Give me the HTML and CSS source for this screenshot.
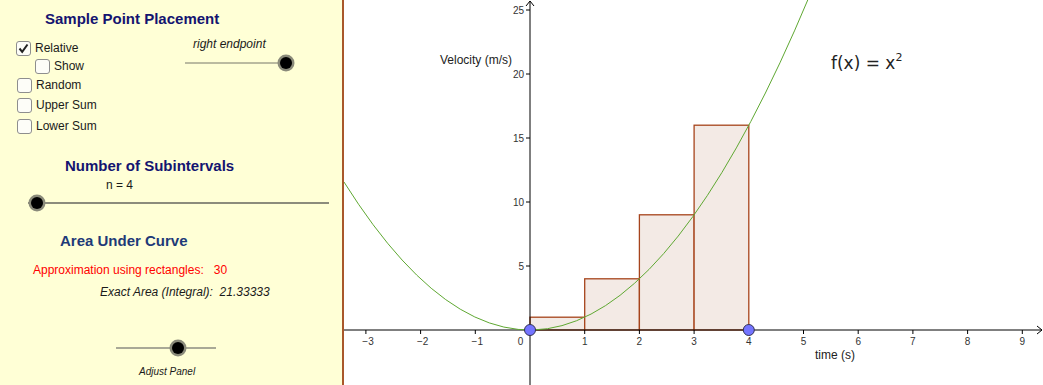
FILE: index.html
```html
<!DOCTYPE html>
<html lang="en">
<head>
  <meta charset="UTF-8">
  <title>Riemann Sums</title>
  <link rel="stylesheet" href="styles.css">
</head>
<body>
  <div class="app">
    <div class="panel">
      <div class="title title-sample">Sample Point Placement</div>

      <div class="options">
        <div class="checks">
          <div class="check">
            <span class="box">
              <svg width="13" height="13" viewBox="0 0 13 13"><polyline points="2.5,6.5 5.2,9.8 10.5,2.5" fill="none" stroke="#222" stroke-width="2"/></svg>
            </span>
            <span>Relative</span>
          </div>
          <div class="check check-show"><span class="box"></span><span>Show</span></div>
          <div class="check check-random"><span class="box"></span><span>Random</span></div>
          <div class="check check-upper"><span class="box"></span><span>Upper Sum</span></div>
          <div class="check check-lower"><span class="box"></span><span>Lower Sum</span></div>
        </div>
        <div class="endpoint">
          <div class="endpoint-label">right endpoint</div>
          <svg class="slider slider-endpoint" width="112" height="18">
            <line x1="0" y1="9" x2="105" y2="9" stroke="#77776a" stroke-width="1"/>
            <circle cx="101" cy="9" r="8.5" fill="#8a8a7a"/>
            <circle cx="101" cy="9" r="6" fill="#000"/>
          </svg>
        </div>
      </div>

      <div class="title title-sub">Number of Subintervals</div>
      <div class="n-label">n = 4</div>
      <svg class="slider slider-n" width="304" height="18">
        <line x1="1" y1="9" x2="302" y2="9" stroke="#8c8c7c" stroke-width="2"/>
        <circle cx="10" cy="9" r="8.5" fill="#8a8a7a"/>
        <circle cx="10" cy="9" r="6" fill="#000"/>
      </svg>

      <div class="title title-area">Area Under Curve</div>
      <div class="approx">Approximation using rectangles:   30</div>
      <div class="exact">Exact Area (Integral):  21.33333</div>
      <svg class="slider slider-adjust" width="101" height="18">
        <line x1="0" y1="9" x2="100" y2="9" stroke="#8c8c80" stroke-width="1.5"/>
        <circle cx="62" cy="9" r="8.5" fill="#8a8a7a"/>
        <circle cx="62" cy="9" r="6" fill="#000"/>
      </svg>
      <div class="adjust">Adjust Panel</div>
    </div>

    <svg class="graph" width="699" height="385" viewBox="0 0 699 385">
      <!-- rectangles, right endpoint, n = 4 -->
      <g class="rects">
        <rect x="186" y="317.2" width="54.7" height="12.8"/>
        <rect x="240.7" y="278.8" width="54.7" height="51.2"/>
        <rect x="295.4" y="214.8" width="54.7" height="115.2"/>
        <rect x="350.1" y="125.2" width="54.7" height="204.8"/>
      </g>

      <!-- axes -->
      <g class="axes">
        <line x1="0" y1="330" x2="698" y2="330"/>
        <polyline points="693,326 698,330 693,334" fill="none"/>
        <line x1="186" y1="385" x2="186" y2="1"/>
        <polyline points="182,6 186,1 190,6" fill="none"/>

        <line x1="21.9" y1="330" x2="21.9" y2="334"/>
        <line x1="76.6" y1="330" x2="76.6" y2="334"/>
        <line x1="131.3" y1="330" x2="131.3" y2="334"/>
        <line x1="240.7" y1="330" x2="240.7" y2="334"/>
        <line x1="295.4" y1="330" x2="295.4" y2="334"/>
        <line x1="350.1" y1="330" x2="350.1" y2="334"/>
        <line x1="404.8" y1="330" x2="404.8" y2="334"/>
        <line x1="459.5" y1="330" x2="459.5" y2="334"/>
        <line x1="514.2" y1="330" x2="514.2" y2="334"/>
        <line x1="568.9" y1="330" x2="568.9" y2="334"/>
        <line x1="623.6" y1="330" x2="623.6" y2="334"/>
        <line x1="678.3" y1="330" x2="678.3" y2="334"/>

        <line x1="182" y1="266" x2="186" y2="266"/>
        <line x1="182" y1="202" x2="186" y2="202"/>
        <line x1="182" y1="138" x2="186" y2="138"/>
        <line x1="182" y1="74" x2="186" y2="74"/>
        <line x1="182" y1="10" x2="186" y2="10"/>
      </g>

      <g class="ticks-x">
        <text x="24" y="345">−3</text>
        <text x="78.6" y="345">−2</text>
        <text x="133.3" y="345">−1</text>
        <text x="176.5" y="345">0</text>
        <text x="240.7" y="345">1</text>
        <text x="295.4" y="345">2</text>
        <text x="350.1" y="345">3</text>
        <text x="404.8" y="345">4</text>
        <text x="459.5" y="345">5</text>
        <text x="514.2" y="345">6</text>
        <text x="568.9" y="345">7</text>
        <text x="623.6" y="345">8</text>
        <text x="678.3" y="345">9</text>
      </g>
      <g class="ticks-y">
        <text x="180" y="269.5">5</text>
        <text x="180" y="205.5">10</text>
        <text x="180" y="141.5">15</text>
        <text x="180" y="77.5">20</text>
        <text x="180" y="13.5">25</text>
      </g>

      <!-- f(x) = x^2 -->
      <path class="curve" d="M0,182.03 Q232.5,551.95 465,-2.9"/>

      <circle class="pt" cx="186" cy="330" r="5.5"/>
      <circle class="pt" cx="404.8" cy="330" r="5.5"/>

      <text class="axis-label" x="96" y="64">Velocity (m/s)</text>
      <text class="axis-label" x="471" y="359">time (s)</text>
      <text class="formula" x="487" y="69">f(x) = x<tspan class="sup" dy="-8">2</tspan></text>
    </svg>
  </div>
</body>
</html>
```

FILE: styles.css
```css
body {
  margin: 0;
  padding: 0;
  background-color: #ffffff;
  font-family: "Liberation Sans", Arial, sans-serif;
}

.app {
  display: flex;
  width: 1043px;
  height: 385px;
  overflow: hidden;
}

.panel {
  width: 342px;
  flex-shrink: 0;
  border-right: 2px solid #a9582a;
  background-color: #ffffd6;
  padding-top: 10px;
  box-sizing: content-box;
  font-size: 12px;
  color: #1a1a1a;
}

.title {
  font-size: 15px;
  font-weight: bold;
  line-height: 18px;
  color: #141470;
}

.title-sample {
  margin-left: 45px;
}

.options {
  display: grid;
  grid-template-columns: 185px auto;
  margin-top: 9px;
}

.checks {
  padding-left: 16px;
  padding-top: 4px;
}

.check {
  display: flex;
  align-items: center;
  gap: 4px;
  height: 15px;
  line-height: 15px;
}

.check-show {
  margin-top: 3px;
  margin-left: 19px;
}

.check-random {
  margin-top: 4px;
  margin-left: 1px;
}

.check-upper {
  margin-top: 5px;
  margin-left: 1px;
}

.check-lower {
  margin-top: 6px;
  margin-left: 1px;
}

.box {
  display: flex;
  align-items: center;
  justify-content: center;
  width: 13px;
  height: 13px;
  border: 1px solid #8e8e8e;
  border-radius: 3px;
  background-color: #fdfdf8;
}

.endpoint-label {
  margin-left: 8px;
  font-style: italic;
  line-height: 14px;
}

.slider {
  display: block;
}

.slider-endpoint {
  margin-top: 3px;
}

.title-sub {
  margin-top: 23px;
  margin-left: 65px;
}

.n-label {
  margin-top: 3px;
  margin-left: 106px;
  line-height: 14px;
}

.slider-n {
  margin-top: 2px;
  margin-left: 27px;
}

.title-area {
  margin-top: 20px;
  margin-left: 60px;
  color: #1e3a78;
}

.approx {
  margin-top: 13px;
  margin-left: 33px;
  line-height: 14px;
  color: #ff0000;
  white-space: pre;
}

.exact {
  margin-top: 8px;
  margin-left: 100px;
  line-height: 14px;
  font-style: italic;
  white-space: pre;
}

.slider-adjust {
  margin-top: 40px;
  margin-left: 116px;
}

.adjust {
  margin-top: 9px;
  margin-left: 139px;
  font-size: 10px;
  line-height: 12px;
  font-style: italic;
}

/* graph */
.graph {
  display: block;
  flex-shrink: 0;
  background-color: #ffffff;
}

.rects rect {
  fill: #f3eae5;
  stroke: #a6441c;
  stroke-width: 1.3;
}

.axes line,
.axes polyline {
  stroke: #000000;
  stroke-width: 1;
}

.ticks-x text,
.ticks-y text {
  font-family: "Liberation Sans", Arial, sans-serif;
  font-size: 10px;
  fill: #333333;
}

.ticks-x text {
  text-anchor: middle;
}

.ticks-y text {
  text-anchor: end;
}

.curve {
  fill: none;
  stroke: #5fa832;
  stroke-width: 1;
}

.pt {
  fill: #7474ff;
  stroke: #333355;
  stroke-width: 1;
}

.axis-label {
  font-family: "Liberation Sans", Arial, sans-serif;
  font-size: 12px;
  fill: #222222;
}

.formula {
  font-family: "DejaVu Sans", sans-serif;
  font-size: 17px;
  fill: #222222;
}

.formula .sup {
  font-size: 11px;
}
```
